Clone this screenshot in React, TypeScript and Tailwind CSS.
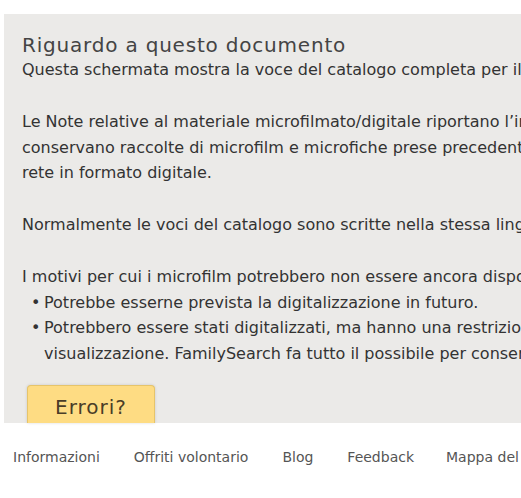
const lines = {
  intro: "Questa schermata mostra la voce del catalogo completa per il titolo selezionato.",
};

const footerLinks = ["Informazioni", "Offriti volontario", "Blog", "Feedback", "Mappa del sito"];

export default function App() {
  return (
    <div
      className="h-[498px] w-[521px] overflow-hidden bg-white text-[#333]"
      style={{ fontFamily: '"DejaVu Sans", Verdana, sans-serif' }}
    >
      <div className="pt-[14px] pl-[4px]">
        <div className="w-[900px] bg-[#ebeae8] pl-[18px] pt-[19px]">
          <h2 className="text-[20px] leading-[24px] tracking-[0.8px] text-[#444]">Riguardo a questo documento</h2>
          <div className="whitespace-nowrap text-[16px] leading-[25.85px]">
            <p>{lines.intro}</p>
            <p className="mt-[25.85px]">
              Le Note relative al materiale microfilmato/digitale riportano l’indicazione delle biblioteche che
              <br />
              conservano raccolte di microfilm e microfiche prese precedentemente in prestito, o disponibili in
              <br />
              rete in formato digitale.
            </p>
            <p className="mt-[25.85px]">Normalmente le voci del catalogo sono scritte nella stessa lingua del documento.</p>
            <p className="mt-[25.85px]">I motivi per cui i microfilm potrebbero non essere ancora disponibili online sono:</p>
            <ul className="pl-[22px]">
              <li className="relative">
                <span className="absolute left-[-13px] top-[0px]">•</span>
                Potrebbe esserne prevista la digitalizzazione in futuro.
              </li>
              <li className="relative">
                <span className="absolute left-[-13px] top-[0px]">•</span>
                Potrebbero essere stati digitalizzati, ma hanno una restrizione che ne limita la
                <br />
                visualizzazione. FamilySearch fa tutto il possibile per conservare i diritti.
              </li>
            </ul>
          </div>
          <div className="mt-[18px] -mb-[3px] flex pl-[5px]">
            <button className="relative h-[38px] w-[128px] rounded-t-[4px] border border-b-0 border-[#e6c46a] bg-[#fedc83] pt-[5px] text-[20px] tracking-[1px] text-[#4a3d28] shadow-[0_0_3px_rgba(0,0,0,0.15)]">
              Errori?
            </button>
          </div>
        </div>
      </div>
      <div className="flex whitespace-nowrap pl-[13px] pt-[27px] text-[14px] text-[#555]">
        {footerLinks.map((l, i) => (
          <a key={l} className={i === 3 ? "mr-[32px]" : "mr-[34px]"}>
            {l}
          </a>
        ))}
      </div>
    </div>
  );
}
